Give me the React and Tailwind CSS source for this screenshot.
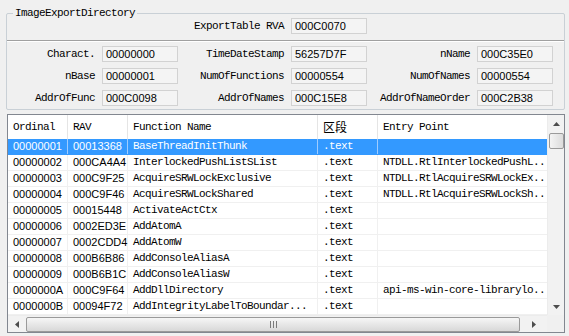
import React from 'react';

const mono = "font-['Liberation_Mono',monospace] text-[11px] tracking-[-0.6px]";
const sans = "font-['Liberation_Sans',Arial,sans-serif] text-[11px]";

const rows = [
  ['00000001', '00013368', 'BaseThreadInitThunk', '.text', ''],
  ['00000002', '000CA4A4', 'InterlockedPushListSList', '.text', 'NTDLL.RtlInterlockedPushL..'],
  ['00000003', '000C9F25', 'AcquireSRWLockExclusive', '.text', 'NTDLL.RtlAcquireSRWLockEx..'],
  ['00000004', '000C9F46', 'AcquireSRWLockShared', '.text', 'NTDLL.RtlAcquireSRWLockSh..'],
  ['00000005', '00015448', 'ActivateActCtx', '.text', ''],
  ['00000006', '0002ED3E', 'AddAtomA', '.text', ''],
  ['00000007', '0002CDD4', 'AddAtomW', '.text', ''],
  ['00000008', '000B6B86', 'AddConsoleAliasA', '.text', ''],
  ['00000009', '000B6B1C', 'AddConsoleAliasW', '.text', ''],
  ['0000000A', '000C9F64', 'AddDllDirectory', '.text', 'api-ms-win-core-librarylo..'],
  ['0000000B', '00094F72', 'AddIntegrityLabelToBoundar...', '.text', ''],
];

// read-only edit box
const Field = ({ value }) => (
  <div className={`w-[76px] h-[16px] border border-[#d2d2d2] bg-[#f4f4f4] pl-[3px] leading-[14px] text-black ${sans}`}>
    {value}
  </div>
);

const Label = ({ children }) => (
  <div className={`text-right pr-[7px] leading-[16px] text-black whitespace-nowrap ${mono}`}>{children}</div>
);

const Arrow = ({ dir }) => {
  const pts = {
    up: '0,4 3.5,0 7,4',
    down: '0,0 3.5,4 7,0',
    left: '4,0 0,3.5 4,7',
    right: '0,0 4,3.5 0,7',
  }[dir];
  const vert = dir === 'up' || dir === 'down';
  return (
    <svg width={vert ? 7 : 4} height={vert ? 4 : 7}>
      <polygon points={pts} fill="#4d4d4d" />
    </svg>
  );
};

export default function App() {
  return (
    <div className="w-[569px] h-[336px] bg-[#f0f0f0] pt-[13px] pl-[6px] pr-[4px] overflow-hidden">
      {/* group box */}
      <div className="relative h-[97px] border border-[#c9d0d6] rounded-[2px]">
        <div className={`absolute top-[-8px] left-[6px] bg-[#f0f0f0] px-[2px] leading-[14px] text-black ${mono}`}>
          ImageExportDirectory
        </div>
        <div className="grid grid-cols-[95px_76px_113px_76px_110px_76px] pt-[4px] h-[26px]">
          <div />
          <div />
          <Label>ExportTable RVA</Label>
          <Field value="000C0070" />
        </div>
        <div className="h-[1px] bg-[#a0a0a0]" />
        <div className="h-[1px] bg-white" />
        <div className="grid grid-cols-[95px_76px_113px_76px_110px_76px] gap-y-[6px] pt-[4px]">
          <Label>Charact.</Label>
          <Field value="00000000" />
          <Label>TimeDateStamp</Label>
          <Field value="56257D7F" />
          <Label>nName</Label>
          <Field value="000C35E0" />
          <Label>nBase</Label>
          <Field value="00000001" />
          <Label>NumOfFunctions</Label>
          <Field value="00000554" />
          <Label>NumOfNames</Label>
          <Field value="00000554" />
          <Label>AddrOfFunc</Label>
          <Field value="000C0098" />
          <Label>AddrOfNames</Label>
          <Field value="000C15E8" />
          <Label>AddrOfNameOrder</Label>
          <Field value="000C2B38" />
        </div>
      </div>

      {/* list view */}
      <div className="mt-[4px] ml-[1px] w-[558px] h-[219px] border border-[#828790] bg-white flex flex-col">
        <div className="flex h-[200px]">
          <div className="w-[539px] overflow-hidden">
            <div className={`flex h-[24px] items-center text-black ${mono}`}>
              <div className="w-[60px] h-full pl-[5px] flex items-center border-r border-[#e5e5e5]">Ordinal</div>
              <div className="w-[60px] h-full pl-[5px] flex items-center border-r border-[#e5e5e5]">RAV</div>
              <div className="w-[190px] h-full pl-[5px] flex items-center border-r border-[#e5e5e5]">Function Name</div>
              <div className="w-[60px] h-full pl-[5px] flex items-center border-r border-[#e5e5e5] font-['Noto_Sans_CJK_SC',sans-serif] text-[12px] tracking-normal">区段</div>
              <div className="w-[169px] h-full pl-[5px] flex items-center">Entry Point</div>
            </div>
            {rows.map((r, i) => {
              const sel = i === 0;
              const line = sel ? 'border-[#9fccff]' : 'border-[#f0f0f0]';
              return (
                <div
                  key={r[0]}
                  className={`flex h-[16px] border-b ${sel ? 'bg-[#3399ff] text-white border-[#3399ff]' : 'text-black border-[#f0f0f0]'}`}
                >
                  <div className={`w-[60px] pl-[5px] leading-[15px] border-r ${line} ${sans}`}>{r[0]}</div>
                  <div className={`w-[60px] pl-[5px] leading-[15px] border-r ${line} ${sans}`}>{r[1]}</div>
                  <div className={`w-[190px] pl-[5px] leading-[15px] border-r whitespace-nowrap overflow-hidden ${line} ${mono}`}>{r[2]}</div>
                  <div className={`w-[60px] pl-[5px] leading-[15px] border-r ${line} ${mono}`}>{r[3]}</div>
                  <div className={`w-[169px] pl-[5px] leading-[15px] whitespace-nowrap overflow-hidden ${mono}`}>{r[4]}</div>
                </div>
              );
            })}
          </div>
          {/* vertical scrollbar */}
          <div className="w-[17px] bg-[#f2f2f2] border-l border-[#ececec] flex flex-col items-center">
            <div className="h-[17px] w-full flex items-center justify-center">
              <Arrow dir="up" />
            </div>
            <div className="mt-[1px] w-[15px] h-[16px] rounded-[2px] border border-[#9a9a9a] bg-gradient-to-r from-[#f4f4f4] to-[#dcdcdc]" />
            <div className="flex-1" />
            <div className="h-[17px] w-full flex items-center justify-center">
              <Arrow dir="down" />
            </div>
          </div>
        </div>
        {/* horizontal scrollbar */}
        <div className="flex h-[17px]">
          <div className="w-[539px] bg-[#f2f2f2] border-t border-[#ececec] flex items-center">
            <div className="w-[17px] flex items-center justify-center">
              <Arrow dir="left" />
            </div>
            <div className="ml-[1px] w-[494px] h-[15px] rounded-[2px] border border-[#9a9a9a] bg-gradient-to-b from-[#f6f6f6] to-[#d8d8d8] flex items-center justify-center">
              <svg width="7" height="7">
                <line x1="0.5" y1="0" x2="0.5" y2="7" stroke="#7a7a7a" />
                <line x1="3.5" y1="0" x2="3.5" y2="7" stroke="#7a7a7a" />
                <line x1="6.5" y1="0" x2="6.5" y2="7" stroke="#7a7a7a" />
              </svg>
            </div>
            <div className="flex-1 flex items-center justify-center">
              <Arrow dir="right" />
            </div>
          </div>
          <div className="w-[17px] bg-[#f0f0f0]" />
        </div>
      </div>
    </div>
  );
}
